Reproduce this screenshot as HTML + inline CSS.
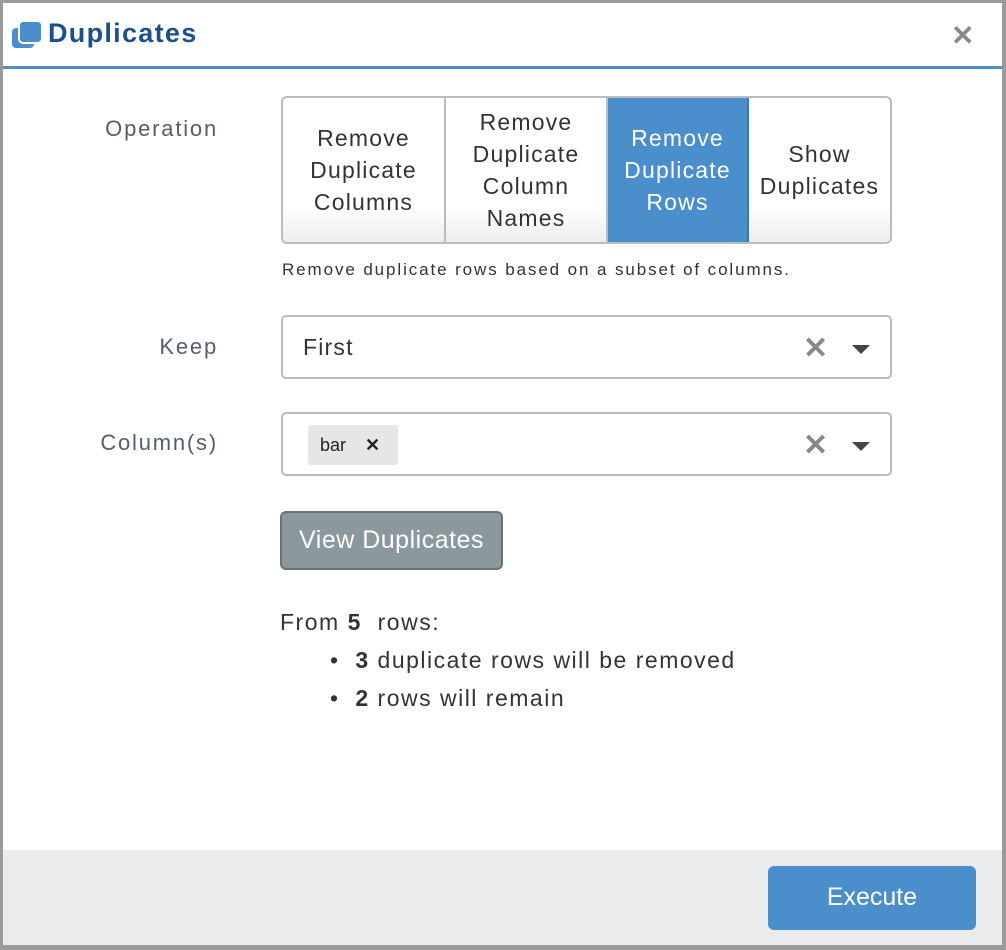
<!DOCTYPE html>
<html><head><style>
*{box-sizing:border-box;margin:0;padding:0}
body{width:1006px;height:950px;background:#9a9a9a;font-family:"Liberation Sans",sans-serif;position:relative;overflow:hidden}
.dlg{position:absolute;left:3px;top:3px;width:999px;height:942px;background:#fff}
.hdr{position:absolute;left:0;top:0;width:999px;height:66px;border-bottom:3px solid #4a8fcb}
.title{position:absolute;left:45px;top:15px;font-size:27px;font-weight:bold;color:#1d4f8f;letter-spacing:1.3px}
.close{position:absolute;left:948px;top:16px;font-size:28px;color:#888;font-weight:bold}
.lbl{position:absolute;font-size:22px;color:#555e6a;text-align:right;width:215px;left:0;letter-spacing:1.8px}
.seg{position:absolute;left:278px;top:93px;width:611px;height:148px;border:2px solid #b8bdc0;border-radius:6px;display:flex;overflow:hidden;background:linear-gradient(#fff 75%,#eceeee)}
.seg div{display:flex;align-items:center;justify-content:center;text-align:center;font-size:23px;line-height:32px;color:#333;border-right:2px solid #b8bdc0;letter-spacing:1.2px}
.seg div:last-child{border-right:none}
.seg .on{background:#4a8fcb;color:#fff;border-right:2px solid #3a78ad}
.help{position:absolute;left:279px;top:257px;font-size:17px;color:#333;letter-spacing:1.9px}
.sel{position:absolute;left:278px;width:611px;height:64px;border:2px solid #b8bdc0;border-radius:5px;background:#fff}
.sx{position:absolute;left:520px;top:14px;font-size:30px;color:#888;font-weight:bold}
.tri{position:absolute;left:569px;top:28px;width:0;height:0;border-left:9px solid transparent;border-right:9px solid transparent;border-top:9px solid #444}
.btn{position:absolute;left:277px;top:508px;width:223px;height:59px;background:#8b989d;border:2px solid #6a7478;border-radius:6px;color:#fff;font-size:25px;text-align:center;line-height:55px;letter-spacing:0.5px}
.txt{position:absolute;font-size:23px;color:#333;letter-spacing:1.5px}
.foot{position:absolute;left:0;top:847px;width:999px;height:95px;background:#eaebed}
.exe{position:absolute;left:765px;top:16px;width:208px;height:64px;background:#4a8fcb;border-radius:6px;color:#fff;font-size:25px;text-align:center;line-height:62px}
</style></head><body>
<div class="dlg">
<div class="hdr">
<svg style="position:absolute;left:8px;top:17px" width="32" height="30"><rect x="1" y="8" width="22" height="20" rx="4" fill="#4a8fcb"/><rect x="8" y="1" width="23" height="22" rx="4" fill="#4a8fcb" stroke="#fff" stroke-width="2"/></svg>
<div class="title">Duplicates</div>
<div class="close">✕</div>
</div>
<div class="lbl" style="top:113px">Operation</div>
<div class="seg">
<div style="width:163px">Remove<br>Duplicate<br>Columns</div>
<div style="width:162px">Remove<br>Duplicate<br>Column<br>Names</div>
<div class="on" style="width:141px">Remove<br>Duplicate<br>Rows</div>
<div style="flex:1">Show<br>Duplicates</div>
</div>
<div class="help">Remove duplicate rows based on a subset of columns.</div>
<div class="lbl" style="top:331px">Keep</div>
<div class="sel" style="top:312px"><span style="position:absolute;left:20px;top:17px;font-size:23px;color:#333;letter-spacing:1.2px">First</span><span class="sx">✕</span><span class="tri"></span></div>
<div class="lbl" style="top:427px">Column(s)</div>
<div class="sel" style="top:409px"><span style="position:absolute;left:25px;top:11px;width:90px;height:40px;background:#e6e6e6;border-radius:3px;font-size:18px;line-height:40px;padding-left:12px;color:#222">bar <b style="margin-left:14px">✕</b></span><span class="sx">✕</span><span class="tri"></span></div>
<div class="btn">View Duplicates</div>
<div class="txt" style="left:277px;top:606px">From <b>5</b>&nbsp; rows:</div>
<div class="txt" style="left:327px;top:644px">•&nbsp; <b>3</b> duplicate rows will be removed</div>
<div class="txt" style="left:327px;top:682px">•&nbsp; <b>2</b> rows will remain</div>
<div class="foot"><div class="exe">Execute</div></div>
</div>
</body></html>
